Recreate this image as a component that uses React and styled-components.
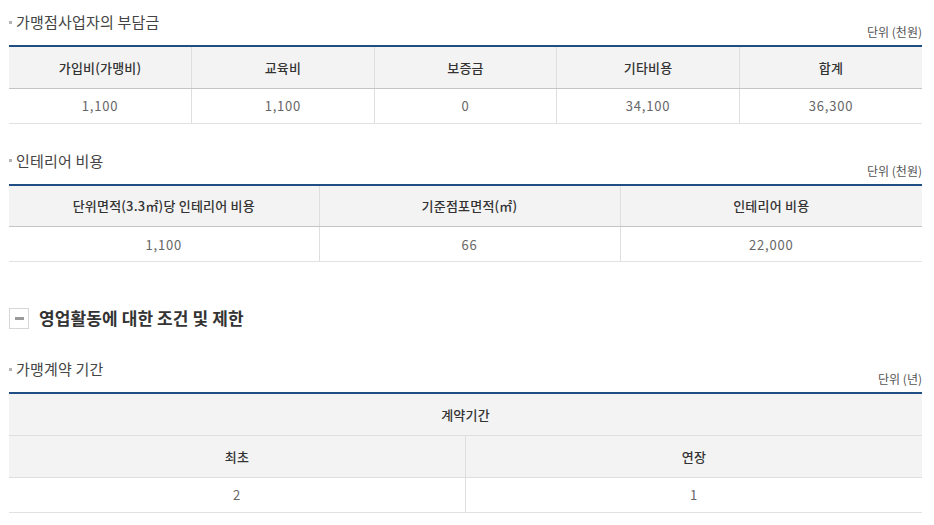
import React from "react";
import styled, { createGlobalStyle } from "styled-components";

const Global = createGlobalStyle`
  html, body { margin: 0; padding: 0; background: #fff; }
  body {
    font-family: "Noto Sans CJK KR", "Noto Sans", "Liberation Sans", sans-serif;
    color: #555;
  }
  * { box-sizing: border-box; }
`;

const Page = styled.div`
  width: 934px;
  padding: 11px 12px 0 9px;
`;

const Section = styled.section`
  margin-top: ${(p) => p.$top || 0}px;
`;

const TitleRow = styled.div`
  display: flex;
  justify-content: space-between;
  align-items: flex-end;
  margin-bottom: 4px;
`;

const Title = styled.h3`
  margin: 0 0 8px;
  display: flex;
  align-items: center;
  font-size: 15px;
  line-height: 22px;
  font-weight: 400;
  color: #444;
  letter-spacing: 0.2px;
  &::before {
    content: "";
    width: 3px;
    height: 3px;
    background: #b5b5b5;
    margin-right: 4px;
  }
`;

const Unit = styled.span`
  font-size: 12px;
  line-height: 18px;
  color: #555;
`;

const Table = styled.table`
  width: 100%;
  border-collapse: collapse;
  table-layout: fixed;
  border-top: 2px solid #1f4f82;
  font-size: 13px;
`;

const Th = styled.th`
  height: ${(p) => p.$h || 42}px;
  background: #f3f3f3;
  color: #333;
  font-weight: 500;
  text-align: center;
  padding: 0;
  letter-spacing: 0.2px;
  border-left: 1px solid #dedede;
  border-bottom: 1px solid ${(p) => (p.$dark ? "#c4c4c4" : "#dedede")};
  &:first-child { border-left: none; }
`;

const Td = styled.td`
  height: 35px;
  color: #666;
  text-align: center;
  padding: 0;
  letter-spacing: 0.8px;
  border-left: 1px solid #dedede;
  border-bottom: 1px solid #e2e2e2;
  &:first-child { border-left: none; }
`;

const Heading = styled.h2`
  margin: 45px 0 0;
  display: flex;
  align-items: center;
  gap: 10px;
  font-size: 17px;
  line-height: 22px;
  font-weight: 700;
  color: #333;
  letter-spacing: 0.1px;
`;

const ToggleBox = styled.span`
  width: 20px;
  height: 21px;
  border: 1px solid #d6d6d6;
  background: #fff;
  display: flex;
  align-items: center;
  justify-content: center;
  &::after {
    content: "";
    width: 9px;
    height: 3px;
    background: #9a9a9a;
  }
`;

const SimpleTable = ({ head, body, widths }) => (
  <Table>
    {widths && (
      <colgroup>
        {widths.map((w, i) => (
          <col key={i} style={{ width: w }} />
        ))}
      </colgroup>
    )}
    <thead>
      <tr>
        {head.map((h) => (
          <Th key={h} $dark>
            {h}
          </Th>
        ))}
      </tr>
    </thead>
    <tbody>
      <tr>
        {body.map((b, i) => (
          <Td key={i}>{b}</Td>
        ))}
      </tr>
    </tbody>
  </Table>
);

export default function App() {
  return (
    <Page>
      <Global />
      <Section>
        <TitleRow>
          <Title>가맹점사업자의 부담금</Title>
          <Unit>단위 (천원)</Unit>
        </TitleRow>
        <SimpleTable
          head={["가입비(가맹비)", "교육비", "보증금", "기타비용", "합계"]}
          body={["1,100", "1,100", "0", "34,100", "36,300"]}
        />
      </Section>

      <Section $top={26}>
        <TitleRow>
          <Title>인테리어 비용</Title>
          <Unit>단위 (천원)</Unit>
        </TitleRow>
        <SimpleTable
          widths={[310, 301, 302]}
          head={["단위면적(3.3㎡)당 인테리어 비용", "기준점포면적(㎡)", "인테리어 비용"]}
          body={["1,100", "66", "22,000"]}
        />
      </Section>

      <Heading>
        <ToggleBox />
        영업활동에 대한 조건 및 제한
      </Heading>

      <Section $top={29}>
        <TitleRow>
          <Title>가맹계약 기간</Title>
          <Unit>단위 (년)</Unit>
        </TitleRow>
        <Table>
          <thead>
            <tr>
              <Th colSpan={2} $h={42}>
                계약기간
              </Th>
            </tr>
            <tr>
              <Th $h={42}>최초</Th>
              <Th $h={42}>연장</Th>
            </tr>
          </thead>
          <tbody>
            <tr>
              <Td>2</Td>
              <Td>1</Td>
            </tr>
          </tbody>
        </Table>
      </Section>
    </Page>
  );
}
